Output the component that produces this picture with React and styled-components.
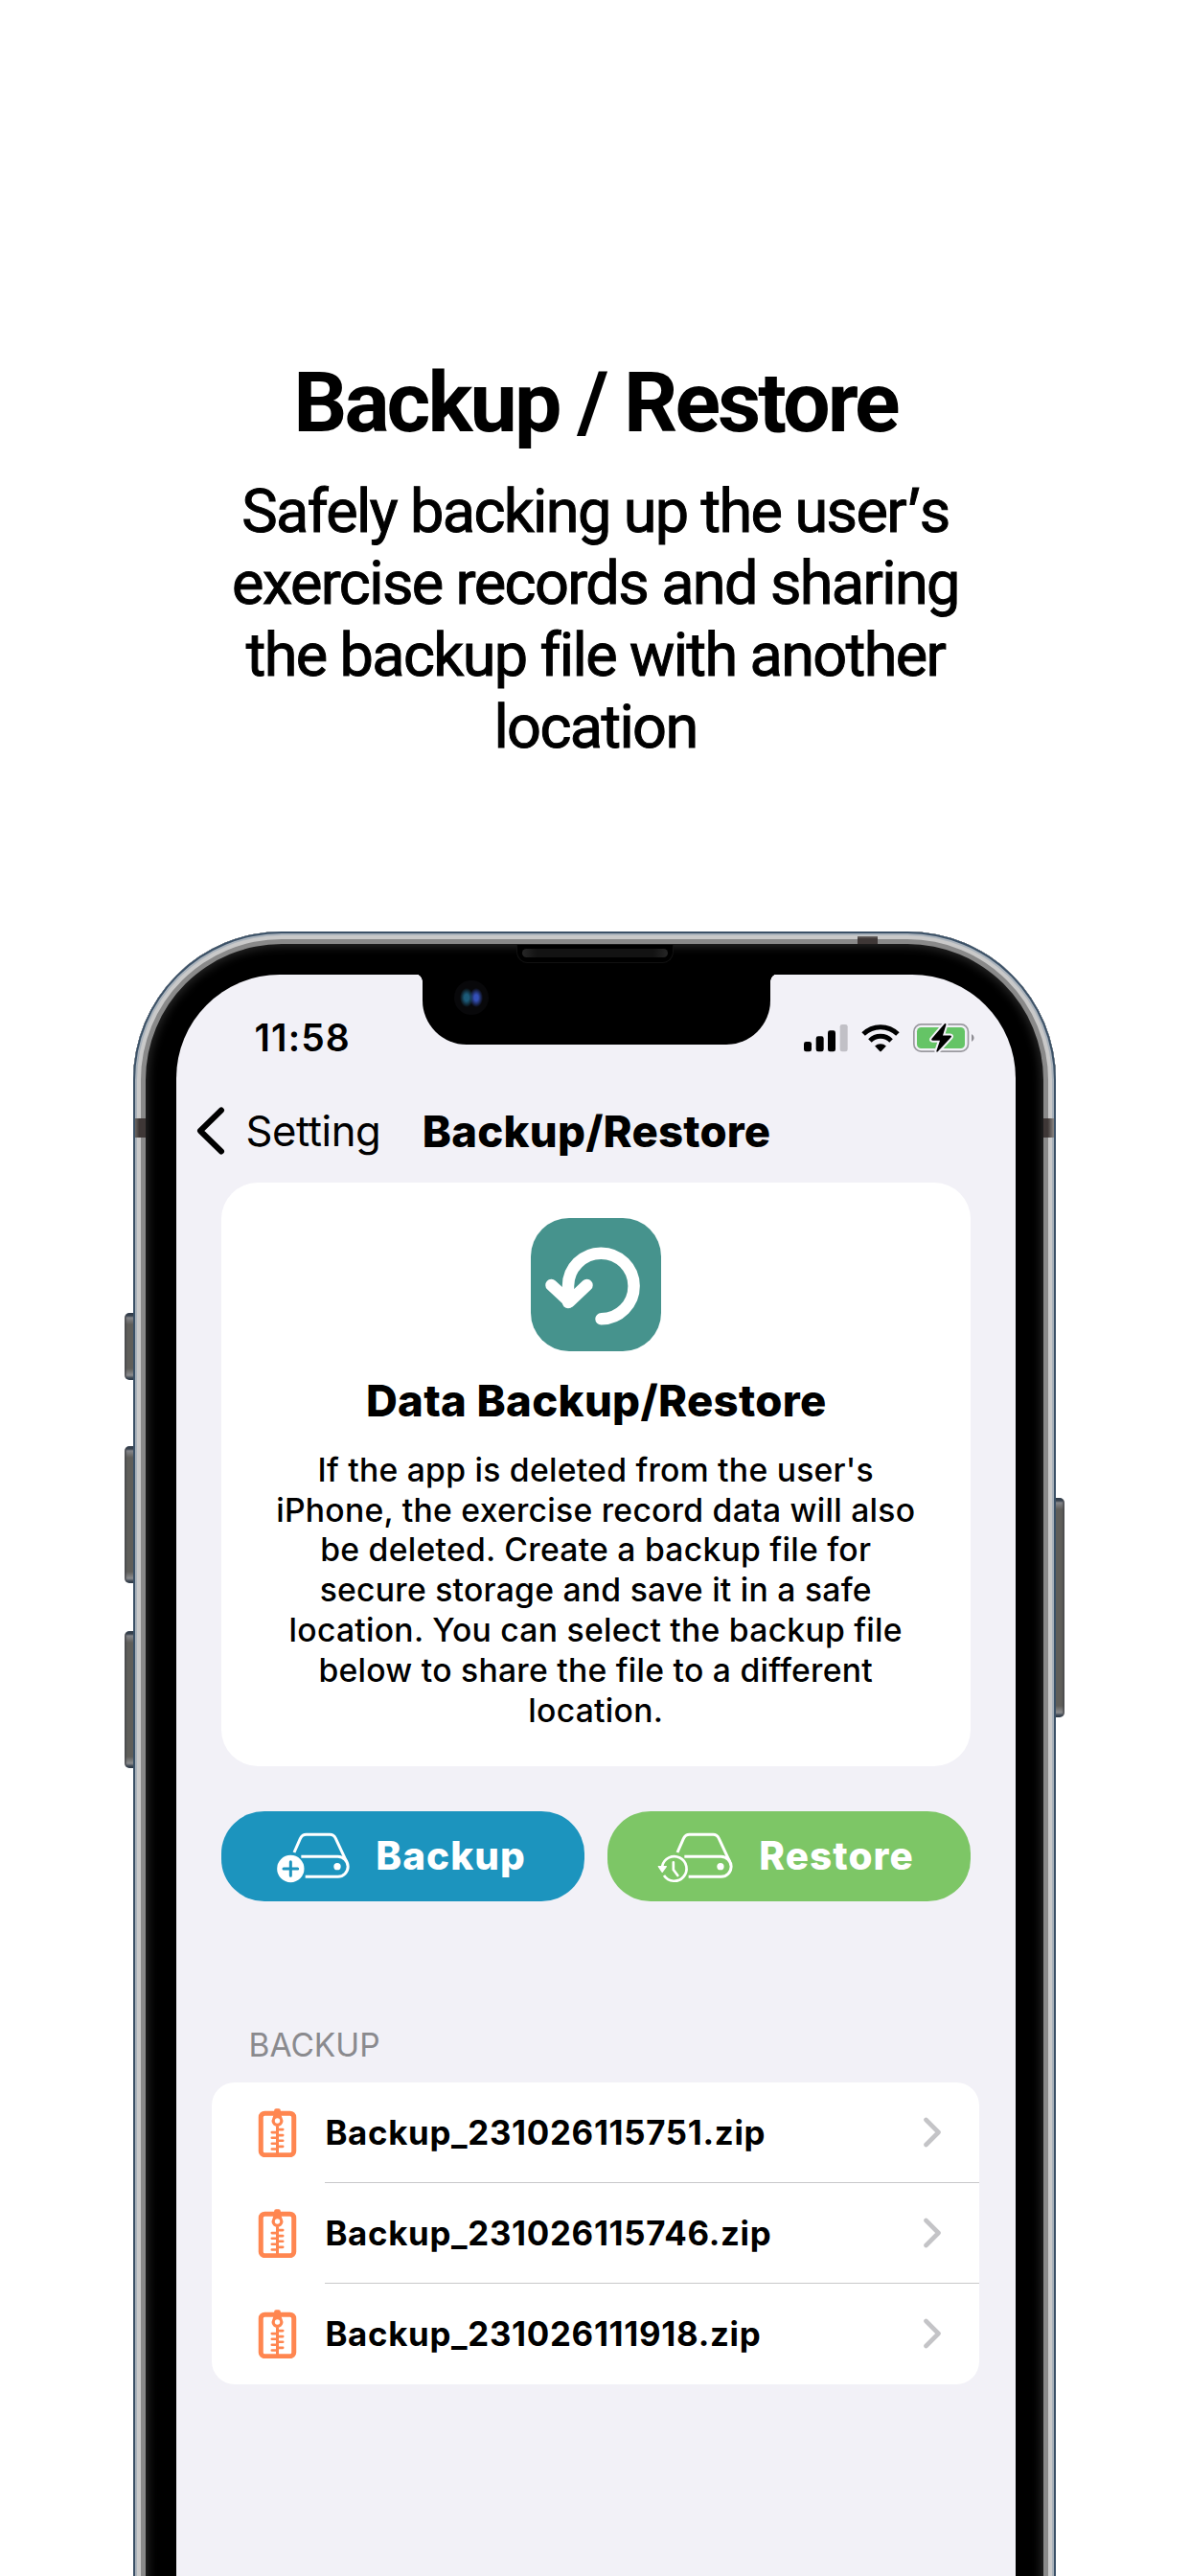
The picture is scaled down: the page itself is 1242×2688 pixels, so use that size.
import React from 'react';
import styled, { createGlobalStyle, css } from 'styled-components';

const color = {
  screen: '#f2f1f7',
  teal: '#46938d',
  blue: '#1c94be',
  green: '#7dc666',
  orange: '#ff8650',
  battery: '#65c466',
};

const GlobalStyle = createGlobalStyle`
  * { box-sizing: border-box; }
  html, body { margin: 0; background: #fff; }
  body { color: #000; font-family: Inter, "Liberation Sans", sans-serif; }
  svg { display: block; flex: none; }
`;

const Page = styled.main`
  width: 1242px;
  height: 2688px;
  padding-top: 370px;
  overflow: hidden;
  display: flex;
  flex-direction: column;
  align-items: center;
  background: #fff;
`;

const Hero = styled.header`
  display: flex;
  flex-direction: column;
  gap: 26px;
  padding-left: 1px;
  text-align: center;
  font-family: Roboto, "Liberation Sans", sans-serif;
`;

const HeroTitle = styled.h1`
  margin: 0;
  font-size: 88px;
  line-height: 100px;
  font-weight: 700;
  letter-spacing: -2.95px;
`;

const HeroText = styled.p`
  margin: 0;
  font-size: 63px;
  line-height: 75px;
  font-weight: 400;
  letter-spacing: -1.62px;
  -webkit-text-stroke: 1px #000;
`;

const Apostrophe = styled.span`
  font-family: Inter, sans-serif;
  line-height: 1;
`;

/* ---------- phone ---------- */

const Phone = styled.section`
  display: flex;
  margin: 176px 1px 0 0;
  width: 981px;
  height: 1900px;
  flex: none;
`;

const Rail = styled.div`
  width: 9px;
  flex: none;
  display: flex;
  flex-direction: column;
  padding-top: ${(p) => p.$top}px;
`;

const SideKey = styled.div`
  flex: none;
  height: ${(p) => p.$h}px;
  margin-bottom: ${(p) => p.$after || 0}px;
  border-radius: ${(p) => (p.$right ? '0 5px 5px 0' : '5px 0 0 5px')};
  background:
    linear-gradient(${(p) => (p.$right ? '270deg' : '90deg')}, #45464a 0, transparent 3px),
    linear-gradient(180deg, #2e3a48 0, #3a4450 3px, #85868a 5px, #5f5e5a 12px,
      #5f5e5a calc(100% - 12px), #8b8c8e calc(100% - 5px), #3a4450 calc(100% - 2px), #2e3a48 100%);
`;

const Frame = styled.div`
  position: relative;
  width: 963px;
  padding: 44.5px 42.5px 0 45px;
  border-radius: 155px 155px 0 0;
  background: #000;
  box-shadow:
    inset 0 0 0 2px #3b5167,
    inset 0 0 0 4px #a9b2bb,
    inset 0 0 0 8px #c9c9c9,
    inset 0 0 0 13px #898989,
    inset 0 0 10px 16px #262626;
`;

const Band = styled.span`
  position: absolute;
  ${(p) => p.$side === 'left' && css`left: 2px; top: 194.5px; width: 11px; height: 20px; background: linear-gradient(90deg, #6a6663, #3e3736 40%);`}
  ${(p) => p.$side === 'right' && css`right: 2px; top: 194.5px; width: 11px; height: 20px; background: linear-gradient(90deg, #3e3736 40%, #8a8683);`}
  ${(p) => p.$side === 'top' && css`left: 756px; top: 5px; width: 21px; height: 8px; background: linear-gradient(#6a6664, #3e3736 35%);`}
`;

const Speaker = styled.span`
  position: absolute;
  left: 400px;
  top: 14px;
  width: 164px;
  height: 19px;
  border-radius: 0 0 12px 12px;
  background: #000;
  border: 1px solid #111;
  border-top: 0;
  padding: 4px 5px 5px;
  &::before {
    content: '';
    display: block;
    height: 9px;
    border-radius: 5px;
    background: linear-gradient(90deg, #262626, #131313 10%, #131313 90%, #262626);
  }
`;

const Notch = styled.span`
  position: absolute;
  left: 301.5px;
  top: 40px;
  width: 363px;
  height: 78px;
  background: #000;
  border-radius: 0 0 46px 46px;
  &::before, &::after {
    content: '';
    position: absolute;
    top: 4px;
    width: 8px;
    height: 8px;
  }
  &::before {
    left: -8px;
    background: radial-gradient(circle at 0 100%, transparent 7.5px, #000 8px);
  }
  &::after {
    right: -8px;
    background: radial-gradient(circle at 100% 100%, transparent 7.5px, #000 8px);
  }
`;

const Camera = styled.span`
  position: absolute;
  left: 33px;
  top: 11px;
  width: 36px;
  height: 36px;
  border-radius: 50%;
  background:
    radial-gradient(ellipse 7px 10px at 13px 18px, #1c5a78 35%, transparent),
    radial-gradient(ellipse 7px 10px at 23px 18px, #3450b8 30%, transparent),
    #08080a;
`;

const Screen = styled.div`
  height: 100%;
  padding-top: 46.5px;
  border-radius: 108px 108px 0 0;
  background: ${color.screen};
`;

const StatusBar = styled.div`
  display: flex;
  align-items: center;
  height: 40px;
  padding: 0 42.5px 0 81.5px;
`;

const Clock = styled.span`
  flex: 1;
  font-size: 39px;
  font-weight: 600;
  letter-spacing: 1.1px;
  line-height: 40px;
`;

const StatusIcons = styled.div`
  display: flex;
  align-items: center;
  gap: 14px;
`;

const NavBar = styled.nav`
  display: flex;
  align-items: center;
  height: 60px;
  margin-top: 47px;
  padding-left: 21px;
  white-space: nowrap;
`;

const BackLabel = styled.span`
  margin: 0 43.5px 0 20.5px;
  font-size: 43.6px;
  letter-spacing: -0.44px;
`;

const NavTitle = styled.h2`
  margin: 0;
  font-size: 45.5px;
  font-weight: 800;
  letter-spacing: 0.22px;
`;

const InfoCard = styled.section`
  display: flex;
  flex-direction: column;
  align-items: center;
  height: 609px;
  margin: 24px 46.7px 0;
  padding-top: 37px;
  border-radius: 38px;
  background: #fff;
  text-align: center;
`;

const Tile = styled.div`
  width: 136px;
  height: 139px;
  border-radius: 40px;
  background: ${color.teal};
`;

const CardTitle = styled.h3`
  margin: 26.5px 0 0;
  padding-left: 1px;
  font-size: 45.5px;
  line-height: 50px;
  font-weight: 800;
  letter-spacing: 0.33px;
`;

const CardText = styled.p`
  margin: 26.4px 0 0;
  font-size: 33.7px;
  line-height: 41.8px;
  font-weight: 500;
  letter-spacing: 0.25px;
`;

const Actions = styled.div`
  display: grid;
  grid-template-columns: 1fr 1fr;
  gap: 23.5px;
  margin: 47px 46.7px 0;
`;

const ActionButton = styled.button`
  display: flex;
  align-items: center;
  height: 93.5px;
  padding: 0 0 0 ${(p) => p.$inset}px;
  border: 0;
  border-radius: 45px / 44px;
  background: ${(p) => p.$fill};
  color: #fff;
  font: 800 40.4px/50px Inter, sans-serif;
  letter-spacing: 1.1px;
  svg { margin: 4px 27px 0 0; }
`;

const SectionLabel = styled.h4`
  margin: 130.5px 0 19px 75.5px;
  font-size: 33.5px;
  line-height: 40px;
  font-weight: 400;
  color: #8a8a8e;
`;

const FileList = styled.ul`
  margin: 0 37.4px;
  padding: 0;
  border-radius: 24px;
  background: #fff;
  list-style: none;
`;

const FileRow = styled.li`
  display: flex;
  align-items: center;
  height: 105px;
  padding-left: 47.5px;
`;

const FileBody = styled.div`
  flex: 1;
  display: flex;
  align-items: center;
  justify-content: space-between;
  height: 105px;
  margin-left: 29.5px;
  padding-right: 39px;
  border-bottom: 1px solid #c8c8ca;
  font-size: 34.8px;
  font-weight: 700;
  letter-spacing: 0.7px;
  ${FileRow}:last-child & { border-bottom-color: transparent; }
`;

/* ---------- icons ---------- */

const Signal = () => (
  <svg width="46" height="29" viewBox="652 326 138 87">
    <rect x="652" y="380" width="24" height="31" rx="7" />
    <rect x="690" y="363" width="24" height="48" rx="7" />
    <rect x="727" y="345" width="24" height="66" rx="7" />
    <rect x="765" y="326" width="24" height="85" rx="7" fill="#c1c0c6" />
  </svg>
);

const Wifi = () => (
  <svg width="40" height="29" viewBox="832 326 120 87">
    <g fill="none" stroke="#000" strokeWidth="15">
      <path d="M838.3 356.3 A76 76 0 0 1 945.7 356.3" />
      <path d="M858.8 376.8 A47 47 0 0 1 925.2 376.8" />
    </g>
    <path d="M874.3 393.5 A26 26 0 0 1 909.7 393.5 L895 409.5 Q892 412.5 889 409.5 Z" />
  </svg>
);

const Battery = () => (
  <svg width="64" height="32" viewBox="996 321 192 96">
    <rect x="998.5" y="326.5" width="170" height="85" rx="23" fill="none" stroke="#9b9aa0" strokeWidth="5" />
    <rect x="1008" y="336" width="150" height="66" rx="13" fill={color.battery} />
    <path d="M1179 357 Q1187 361 1187 369 Q1187 377 1179 381 Z" fill="#8f8e94" />
    <path
      d="M1094.500 325 L1054 372 Q1051.500 377 1057 377 H1080 L1069 410 Q1069 415 1073.500 412 L1115 367 Q1118 362 1112 361.500 H1089 L1099.500 327 Q1099 322 1094.500 325 Z"
      stroke={color.screen}
      strokeWidth="12"
      paintOrder="stroke"
      strokeLinejoin="round"
    />
  </svg>
);

const BackChevron = () => (
  <svg width="31" height="50" viewBox="0 0 31 50" fill="none" stroke="#000" strokeWidth="6" strokeLinecap="round" strokeLinejoin="round">
    <path d="M26 3.500 L4 25 L26 46.500" />
  </svg>
);

const RowChevron = () => (
  <svg width="20" height="32" viewBox="0 0 20 32" fill="none" stroke="#c4c4c7" strokeWidth="4.600" strokeLinecap="round" strokeLinejoin="round">
    <path d="M3.500 3 L16.500 16 L3.500 29" />
  </svg>
);

const UndoGlyph = () => (
  <svg width="136" height="139" viewBox="0 0 136 139" fill="none" stroke="#fff" strokeWidth="12.500" strokeLinecap="round" strokeLinejoin="round">
    <path d="M39 88 V71 A34.300 34.300 0 1 1 73.500 105.300" />
    <path d="M21.500 70 L40.300 87.300 L58.500 70" />
  </svg>
);

const DriveShape = () => (
  <>
    <path d="M322 219 L341 176 Q347 163 360 163 H434 Q446 163 452 175 L486 248" fill="none" />
    <path d="M344 232 H459 A31.500 31.500 0 0 1 459 295 H357" fill="none" />
    <circle cx="457" cy="263" r="11" fill="#fff" stroke="none" />
  </>
);

const DrivePlus = () => (
  <svg width="76" height="53" viewBox="268 156 228 159" stroke="#fff" strokeWidth="9">
    <DriveShape />
    <circle cx="311" cy="270" r="42.500" fill="#fff" stroke="none" />
    <path d="M289 270 H333 M311 248 V292" stroke={color.blue} strokeLinecap="round" />
  </svg>
);

const DriveClock = () => (
  <svg width="79.300" height="53" viewBox="198 156 238 159" stroke="#fff" strokeWidth="9">
    <g transform="translate(-61 0)">
      <DriveShape />
    </g>
    <g fill="none" strokeWidth="8">
      <path d="M213.500 262 A38.500 38.500 0 1 1 219 291" />
      <path d="M248.500 250 V273 L262 291" strokeLinecap="round" strokeLinejoin="round" />
    </g>
    <path d="M202 263 H226 L213.500 280 Z" fill="#fff" strokeWidth="4" strokeLinejoin="round" />
  </svg>
);

const ZipIcon = () => (
  <svg width="41" height="51.500" viewBox="207 119 122 154" stroke={color.orange} fill="none">
    <rect x="216.500" y="134.500" width="103" height="130" rx="12" strokeWidth="15" />
    <path d="M258 126 Q258 120 264 120 H272 Q278 120 278 126 V134 L286 158 A18 18 0 0 1 250 158 L258 134 Z" fill={color.orange} stroke="none" />
    <circle cx="268" cy="158" r="8" fill="#fff" stroke="none" />
    <path d="M268 174 V264" strokeWidth="9" />
    <path
      d="M268 185 H285 M268 203 H285 M268 220 H285 M268 238 H285 M251 194 H268 M251 211 H268 M251 229 H268 M251 246 H268"
      strokeWidth="8"
      strokeLinecap="round"
    />
  </svg>
);

const files = ['Backup_231026115751.zip', 'Backup_231026115746.zip', 'Backup_231026111918.zip'];

export default function App() {
  return (
    <Page>
      <GlobalStyle />
      <Hero>
        <HeroTitle>Backup / Restore</HeroTitle>
        <HeroText>
          Safely backing up the user<Apostrophe>’</Apostrophe>s<br />
          exercise records and sharing<br />
          the backup file with another<br />
          location
        </HeroText>
      </Hero>

      <Phone>
        <Rail $top={398}>
          <SideKey $h={70} $after={68.5} />
          <SideKey $h={143.5} $after={49.5} />
          <SideKey $h={143.5} />
        </Rail>
        <Frame>
          <Band $side="left" />
          <Band $side="right" />
          <Band $side="top" />
          <Screen>
            <StatusBar>
              <Clock>11:58</Clock>
              <StatusIcons>
                <Signal />
                <Wifi />
                <Battery />
              </StatusIcons>
            </StatusBar>
            <NavBar>
              <BackChevron />
              <BackLabel>Setting</BackLabel>
              <NavTitle>Backup/Restore</NavTitle>
            </NavBar>
            <InfoCard>
              <Tile>
                <UndoGlyph />
              </Tile>
              <CardTitle>Data Backup/Restore</CardTitle>
              <CardText>
                If the app is deleted from the user's<br />
                iPhone, the exercise record data will also<br />
                be deleted. Create a backup file for<br />
                secure storage and save it in a safe<br />
                location. You can select the backup file<br />
                below to share the file to a different<br />
                location.
              </CardText>
            </InfoCard>
            <Actions>
              <ActionButton $fill={color.blue} $inset={58.5}>
                <DrivePlus />
                Backup
              </ActionButton>
              <ActionButton $fill={color.green} $inset={52.5}>
                <DriveClock />
                Restore
              </ActionButton>
            </Actions>
            <SectionLabel>BACKUP</SectionLabel>
            <FileList>
              {files.map((name) => (
                <FileRow key={name}>
                  <ZipIcon />
                  <FileBody>
                    {name}
                    <RowChevron />
                  </FileBody>
                </FileRow>
              ))}
            </FileList>
          </Screen>
          <Notch>
            <Camera />
          </Notch>
          <Speaker />
        </Frame>
        <Rail $top={591}>
          <SideKey $right $h={228.5} />
        </Rail>
      </Phone>
    </Page>
  );
}
